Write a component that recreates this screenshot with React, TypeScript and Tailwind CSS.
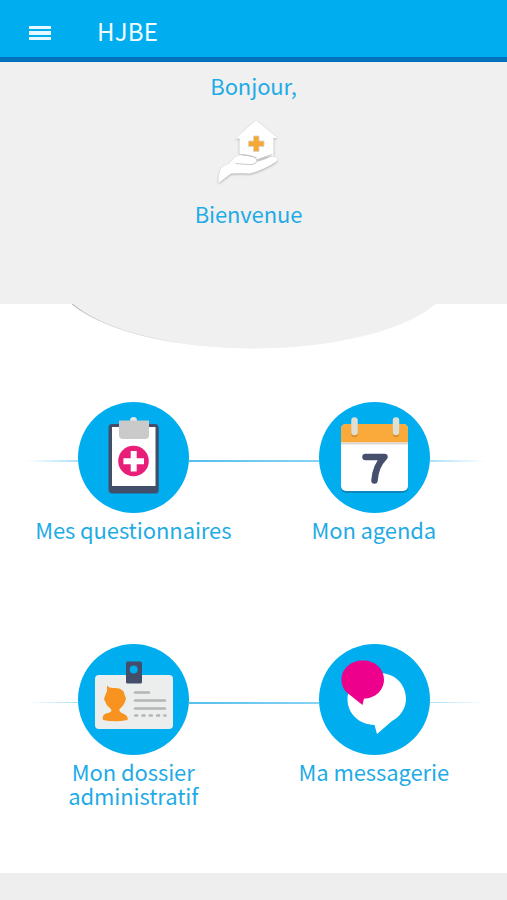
import { ReactNode } from 'react'

interface TileRowProps {
  left: ReactNode
  right: ReactNode
  leftLabel: ReactNode
  rightLabel: ReactNode
}

function HandHouseIcon() {
  return (
    <svg width="76" height="72" viewBox="210 115 76 72" className="drop-shadow-[0_1px_1px_rgba(0,0,0,0.28)]">
      <path fill="#fff" d="M256 120.5 L277.5 138 H273.5 V156.500 Q266 155.500 257 159.5 L252 156 L239.500 154 V138.5 H235.500 Z" />
      <path fill="#fff" d="M218.500 183 Q218.500 173 221 168.500 Q224 165 229 164 Q234 157 240 155 Q248 155.5 254 157.500 Q257 159.5 256.500 162 Q264 160.500 270 157 Q275 156 277 158.500 Q278 160.500 275 162.500 Q262 170.500 250 173.5 Q240 173 231 173.500 Z" />
      <path fill="none" stroke="#cacaca" strokeWidth="1.1" strokeLinecap="round" d="M241 154.500 Q249 154.500 256 157.5 M236 163.5 Q246 164.500 252 164.500 Q255 164 256.500 162 M258 159.500 L272 154.500" />
      <path fill="#f5a838" stroke="#dcd3c4" strokeWidth="0.8" d="M253.5 136 h5.5 v5 h5 v5.5 h-5 v5 h-5.5 v-5 h-5 v-5.5 h5 Z" />
    </svg>
  )
}

function ClipboardIcon() {
  return (
    <svg width="111" height="111" viewBox="78 402 111 111">
      <rect x="109" y="426" width="50" height="68" rx="3.5" fill="#1382b4" />
      <rect x="108.500" y="424" width="50" height="69" rx="3.500" fill="#434e6b" />
      <rect x="112" y="427" width="43.500" height="59" fill="#fff" />
      <circle cx="133.500" cy="420.500" r="3.500" fill="#e6e6e6" />
      <path fill="#cacaca" d="M119 420.500 H149 V435 Q149 439 145 439 H123 Q119 439 119 435 Z" />
      <circle cx="133.500" cy="461" r="15.300" fill="#e91e79" />
      <path fill="#fff" d="M130.700 451 h6 v7.200 h7.300 v6 h-7.300 v7.300 h-6 v-7.300 h-7.300 v-6 h7.300 Z" />
    </svg>
  )
}

function CalendarIcon() {
  return (
    <svg width="111" height="111" viewBox="319 402 111 111">
      <rect x="341" y="426" width="67" height="67" rx="5" fill="#0d86bd" />
      <rect x="341" y="424" width="67" height="67" rx="5" fill="#fff" />
      <path fill="#faaa3a" d="M341 442.500 V429 Q341 424 346 424 H403 Q408 424 408 429 V442.500 Z" />
      <path fill="#d9d9d9" d="M341 442.500 h67 v2 h-67 Z" />
      <path stroke="#d98f29" strokeWidth="6.500" strokeLinecap="round" d="M354.500 427 V434 M396 427 V434" />
      <path stroke="#dfdfd3" strokeWidth="6.500" strokeLinecap="round" d="M354.500 420.500 V432 M396 420.500 V432" />
      <path fill="none" stroke="#46506d" strokeWidth="6.500" strokeLinecap="round" strokeLinejoin="round" d="M365.500 457 H384.500 Q375.500 466 374.500 480.500" />
    </svg>
  )
}

function BadgeIcon() {
  return (
    <svg width="111" height="111" viewBox="78 643.500 111 111">
      <rect x="95" y="674.500" width="78" height="54" rx="4" fill="#eceeee" />
      <rect x="126" y="661" width="16" height="22" rx="1.500" fill="#434e6b" />
      <circle cx="133.700" cy="669" r="4" fill="#00adee" />
      <path fill="#f7931e" d="M107 685 Q109 687.500 113 687.500 Q123.500 686.500 124.500 694 L126 698 Q124.500 705 119.500 708.500 V710.500 Q120.500 712.500 124 713.500 Q128.500 715.500 127.500 719.500 Q115 722 103 719.500 Q101.500 714.500 106 713 Q111 712 111.500 710 Q111 708 107 705 L104 698.500 Q106 692 107 691 Z" />
      <path stroke="#b4b4b4" strokeWidth="2.500" strokeLinecap="round" d="M135 692 H149 M135 700 H165 M135 708 H165" />
      <path stroke="#b4b4b4" strokeWidth="2.500" strokeLinecap="round" strokeDasharray="2 5.300" d="M135.200 715 H165.500" />
    </svg>
  )
}

function ChatIcon() {
  return (
    <svg width="111" height="111" viewBox="319 643.500 111 111">
      <path fill="#fff" d="M377 672.500 C394 671.500 406 683 406 698.500 C406 708 400 716.500 392 720.500 L377 733.500 L374.500 724.500 C359 724 347.500 713 347.500 699 C347.500 684 361 674 377 672.500 Z" />
      <path fill="#ec008c" d="M363 660 C375 660 384 668 384 679 C384 690 375 698 364 698 L362.500 704.500 L350 694.500 C344.500 691 341.500 686 341.500 679 C341.500 668 351 660 363 660 Z" />
    </svg>
  )
}

function TileRow({ left, right, leftLabel, rightLabel }: TileRowProps) {
  return (
    <section>
      <div className="flex items-center pl-[26px]">
        <div className="mt-[7px] h-[1.500px] w-[52px] bg-linear-to-r from-white to-[#a9e0f8]"></div>
        <button type="button" className="size-[111px] shrink-0 rounded-full bg-[#00adee]">{left}</button>
        <div className="mt-[7px] h-0.5 w-[130px] bg-linear-to-r from-[#55bfeb] to-[#86d3f5]"></div>
        <button type="button" className="size-[111px] shrink-0 rounded-full bg-[#00adee]">{right}</button>
        <div className="mt-[7px] h-[1.500px] w-[56px] bg-linear-to-l from-white to-[#a9e0f8]"></div>
      </div>
      <div className="mt-[4px] grid grid-cols-2 px-[13px] text-center">
        <p>{leftLabel}</p>
        <p>{rightLabel}</p>
      </div>
    </section>
  )
}

export default function App() {
  return (
    <div className="flex h-[900px] w-[507px] flex-col overflow-hidden bg-white font-['Noto_Sans_CJK_SC',sans-serif] text-[22px] leading-6 tracking-[-0.1px] text-[#1fabe5]">
      {/* Header */}
      <header className="flex h-[62px] shrink-0 items-center border-b-[5px] border-[#0072bc] bg-[#00adee] pl-[29px] text-[#f2fbff]">
        <button type="button" aria-label="Menu" className="mt-[9px] flex w-[22px] flex-col gap-[2px]">
          <span className="h-[3.500px] bg-[#e6f8ff]"></span>
          <span className="h-[3.500px] bg-[#e6f8ff]"></span>
          <span className="h-[3.500px] bg-[#e6f8ff]"></span>
        </button>
        <h1 className="ml-[46px] mt-[4px] text-[24px] tracking-[0.2px]">HJBE</h1>
      </header>

      {/* Welcome */}
      <section className="flex h-[242px] shrink-0 flex-col items-center bg-[#f0f0f0] pt-[11px]">
        <p>Bonjour,</p>
        <div className="mt-[18px] mb-[14px] -ml-3">
          <HandHouseIcon />
        </div>
        <p className="-ml-[10px]">Bienvenue</p>
      </section>
      <svg width="507" height="46" viewBox="0 304 507 46" className="shrink-0">
        <defs>
          <linearGradient id="edge">
            <stop offset="0" stopColor="#b5b5b5" />
            <stop offset="0.4" stopColor="#f0f0f0" />
          </linearGradient>
        </defs>
        <ellipse cx="252.500" cy="274.500" rx="197.500" ry="74" fill="url(#edge)" />
        <ellipse cx="254.500" cy="274.300" rx="198" ry="74" fill="#f0f0f0" />
      </svg>

      {/* Menu */}
      <main className="mt-[52px] flex flex-1 flex-col">
        <TileRow left={<ClipboardIcon />} right={<CalendarIcon />} leftLabel="Mes questionnaires" rightLabel="Mon agenda" />
        <div className="h-[102.500px]"></div>
        <TileRow left={<BadgeIcon />} right={<ChatIcon />} leftLabel={<>Mon dossier<br />administratif</>} rightLabel="Ma messagerie" />
      </main>

      <footer className="h-[27px] shrink-0 bg-[#eee]"></footer>
    </div>
  )
}
